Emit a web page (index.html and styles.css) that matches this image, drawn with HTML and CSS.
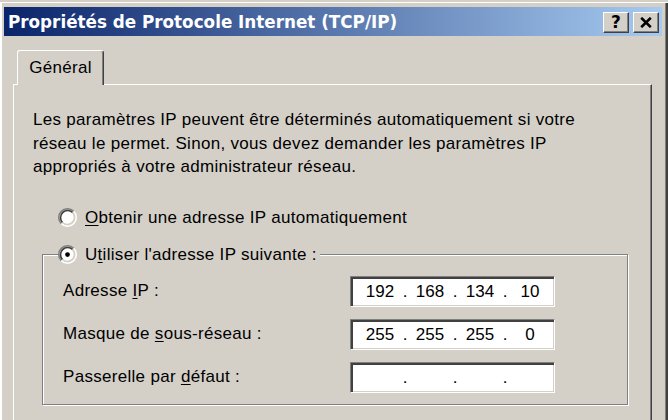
FILE: index.html
```html
<!DOCTYPE html>
<html lang="fr">
<head>
<meta charset="utf-8">
<title>Propriétés de Protocole Internet (TCP/IP)</title>
<link rel="stylesheet" href="styles.css">
</head>
<body>
<div class="window">
  <div class="titlebar">
    <span class="title">Propriétés de Protocole Internet (TCP/IP)</span>
    <div class="tb-buttons">
      <div class="tb-btn help">?</div>
      <div class="tb-btn close">
        <svg width="12" height="11" viewBox="0 0 12 11"><path d="M1.2 0.8 L10.8 10.2 M10.8 0.8 L1.2 10.2" stroke="#000" stroke-width="2.6"/></svg>
      </div>
    </div>
  </div>
  <div class="client">
    <div class="tabs"><div class="tab">Général</div></div>
    <div class="panel">
      <p class="intro">Les paramètres IP peuvent être déterminés automatiquement si votre<br>réseau le permet. Sinon, vous devez demander les paramètres IP<br>appropriés à votre administrateur réseau.</p>
      <div class="radio-row">
        <svg class="radio" width="19" height="19" viewBox="0 0 12 12">
          <circle cx="6" cy="6" r="4.2" fill="#fff"/>
          <path d="M2.11 9.89 A5.5 5.5 0 0 1 9.89 2.11" fill="none" stroke="#808080"/>
          <path d="M9.89 2.11 A5.5 5.5 0 0 1 2.11 9.89" fill="none" stroke="#fff"/>
          <path d="M2.82 9.18 A4.5 4.5 0 0 1 9.18 2.82" fill="none" stroke="#404040"/>
          <path d="M9.18 2.82 A4.5 4.5 0 0 1 2.82 9.18" fill="none" stroke="#d4d0c8"/>
        </svg>
        <span><u>O</u>btenir une adresse IP automatiquement</span>
      </div>
      <fieldset class="group">
        <legend class="radio-row legend">
          <svg class="radio" width="19" height="19" viewBox="0 0 12 12">
            <circle cx="6" cy="6" r="4.2" fill="#fff"/>
            <path d="M2.11 9.89 A5.5 5.5 0 0 1 9.89 2.11" fill="none" stroke="#808080"/>
            <path d="M9.89 2.11 A5.5 5.5 0 0 1 2.11 9.89" fill="none" stroke="#fff"/>
            <path d="M2.82 9.18 A4.5 4.5 0 0 1 9.18 2.82" fill="none" stroke="#404040"/>
            <path d="M9.18 2.82 A4.5 4.5 0 0 1 2.82 9.18" fill="none" stroke="#d4d0c8"/>
            <circle cx="6" cy="6" r="1.5" fill="#000"/>
          </svg>
          <span>U<u>t</u>iliser l'adresse IP suivante :</span>
        </legend>
        <div class="fields">
          <span class="lbl">Adresse <u>I</u>P :</span>
          <div class="ipbox"><span class="oct">192</span><span class="dot">.</span><span class="oct">168</span><span class="dot">.</span><span class="oct">134</span><span class="dot">.</span><span class="oct">10</span></div>
          <span class="lbl">Masque de <u>s</u>ous-réseau :</span>
          <div class="ipbox"><span class="oct">255</span><span class="dot">.</span><span class="oct">255</span><span class="dot">.</span><span class="oct">255</span><span class="dot">.</span><span class="oct">0</span></div>
          <span class="lbl">Passerelle par <u>d</u>éfaut :</span>
          <div class="ipbox"><span class="oct"></span><span class="dot">.</span><span class="oct"></span><span class="dot">.</span><span class="oct"></span><span class="dot">.</span><span class="oct"></span></div>
        </div>
      </fieldset>
    </div>
  </div>
</div>
</body>
</html>
```
FILE: styles.css
```css
* { box-sizing: border-box; }
html, body { margin: 0; padding: 0; }
body {
  width: 668px;
  height: 420px;
  overflow: hidden;
  background: #d4d0c8;
  font-family: "Liberation Sans", Arial, sans-serif;
  font-size: 17px;
  letter-spacing: 0.3px;
  color: #000;
}
.window {
  height: 420px;
  padding: 7px 6px 0 4px;
  background: #d4d0c8;
  box-shadow: inset 0 2px 0 #d4d0c8, inset 2px 3px 0 #fff, inset -2px 0 0 #404040, inset -3px 0 0 #808080;
}
.titlebar {
  height: 29px;
  display: flex;
  align-items: center;
  padding-left: 4px;
  padding-right: 3px;
  background: linear-gradient(to right, #0a246a, #a6caf0);
}
.title {
  color: #fff;
  font-family: "DejaVu Sans", Verdana, sans-serif;
  font-weight: bold;
  font-size: 16.8px;
  letter-spacing: 0;
  white-space: nowrap;
}
.tb-buttons {
  margin-left: auto;
  display: flex;
  gap: 4px;
  padding-top: 1px;
}
.tb-btn {
  width: 26px;
  height: 21px;
  background: #d4d0c8;
  border: 1px solid;
  border-color: #fff #404040 #404040 #fff;
  box-shadow: inset -1px -1px 0 #808080;
  display: flex;
  align-items: center;
  justify-content: center;
  font-family: "DejaVu Sans", Verdana, sans-serif;
  font-weight: bold;
  font-size: 17px;
  letter-spacing: 0;
  line-height: 1;
}
.client {
  padding: 14px 10px 0 9px;
}
.tabs {
  display: flex;
  padding-left: 4px;
}
.tab {
  position: relative;
  z-index: 1;
  width: 87px;
  height: 35px;
  margin-bottom: -1px;
  background: #d4d0c8;
  border-top: 1px solid #fff;
  border-left: 1px solid #fff;
  border-right: 1px solid #404040;
  border-radius: 3px 3px 0 0;
  box-shadow: inset -1px 0 0 #808080;
  display: flex;
  align-items: center;
  justify-content: center;
  padding-bottom: 1px;
}
.panel {
  height: 340px;
  border-top: 1px solid #fff;
  border-left: 1px solid #fff;
  border-right: 1px solid #404040;
  box-shadow: inset -1px 0 0 #808080;
  padding: 23px 20px 0 19px;
}
.intro {
  margin: 0;
  line-height: 23.5px;
  white-space: nowrap;
}
.radio-row {
  display: flex;
  align-items: center;
  gap: 8px;
  height: 23px;
  line-height: 23px;
}
.panel > .radio-row {
  margin-top: 27px;
  padding-left: 25px;
}
.radio { display: block; flex: none; }
.group {
  margin: 14px 0 0 9px;
  width: 586px;
  border: 1px solid #808080;
  box-shadow: inset 1px 1px 0 #fff, 1px 1px 0 #fff;
  padding: 10px 0 11px 15px;
  min-width: 0;
}
.legend {
  padding: 0 3px 0 0;
  background: #d4d0c8;
}
.fields {
  display: grid;
  grid-template-columns: 287px 205px;
  grid-auto-rows: 31px;
  row-gap: 12px;
  padding-left: 5px;
  align-items: center;
}
.ipbox {
  height: 31px;
  background: #fff;
  border: 1px solid;
  border-color: #808080 #fff #fff #808080;
  box-shadow: inset 2px 2px 0 #404040, inset -1px -1px 0 #d4d0c8;
  display: flex;
  align-items: center;
  padding-left: 10px;
  padding-top: 1px;
  letter-spacing: 0;
}
.oct {
  width: 38px;
  text-align: center;
}
.dot {
  width: 12px;
  text-align: center;
}
u { text-decoration-thickness: 1px; text-underline-offset: 2px; }
```
